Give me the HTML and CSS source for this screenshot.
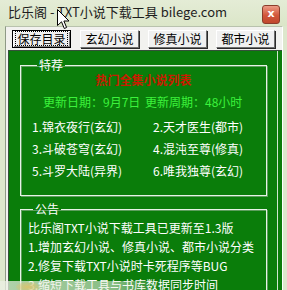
FILE: index.html
```html
<!DOCTYPE html>
<html lang="zh-CN">
<head>
<meta charset="utf-8">
<title>比乐阁 - TXT小说下载工具</title>
<link rel="stylesheet" href="styles.css">
</head>
<body>
<div class="window">
  <div class="titlebar">
    <span class="title">比乐阁 - TXT小说下载工具 bilege.com</span>
    <div class="close">x</div>
  </div>
  <div class="client">
    <div class="toolbar">
      <button class="btn btn-focus"><span class="focus-ring">保存目录</span></button>
      <button class="btn">玄幻小说</button>
      <button class="btn">修真小说</button>
      <button class="btn">都市小说</button>
    </div>
    <div class="panel">
      <div class="panel-inner">
        <fieldset class="box box-hot">
          <legend>特荐</legend>
          <div class="hot">热门全集小说列表</div>
          <div class="date"><span>更新日期：9月7日</span><span>更新周期：48小时</span></div>
          <div class="list">
            <span>1.锦衣夜行(玄幻)</span><span>2.天才医生(都市)</span>
            <span>3.斗破苍穹(玄幻)</span><span>4.混沌至尊(修真)</span>
            <span>5.斗罗大陆(异界)</span><span>6.唯我独尊(玄幻)</span>
          </div>
        </fieldset>
        <fieldset class="box box-notice">
          <legend>公告</legend>
          <p class="line">比乐阁TXT小说下载工具已更新至1.3版</p>
          <p class="line">1.增加玄幻小说、修真小说、都市小说分类</p>
          <p class="line">2.修复下载TXT小说时卡死程序等BUG</p>
          <p class="line">3.缩短下载工具与书库数据同步时间</p>
        </fieldset>
      </div>
    </div>
  </div>
  <svg class="cursor" width="13" height="21" viewBox="0 0 13 21"><path d="M0.5 0.5 L0.5 16.5 L4.5 12.8 L7.3 19.5 L9.6 18.5 L6.9 12 L12 12 Z" fill="#fff" stroke="#000" stroke-width="1"/></svg>
  <div class="ghost"><span class="ghost-icon"></span></div>
</div>
</body>
</html>
```
FILE: styles.css
```css
* { box-sizing: border-box; }
html, body { margin: 0; padding: 0; }
body {
  width: 287px;
  height: 290px;
  overflow: hidden;
  font-family: "Noto Sans CJK SC", "Noto Sans", sans-serif;
  font-size: 12px;
  background: #dfe8cf;
}
.window {
  position: relative;
  width: 287px;
  height: 290px;
  background: #dde7cc;
  display: flex;
  flex-direction: column;
  overflow: hidden;
}
.titlebar {
  height: 26px;
  flex: none;
  display: flex;
  justify-content: space-between;
  align-items: flex-start;
  padding: 0 7px 0 8px;
  background: linear-gradient(#e4ecd6, #dbe6c8);
}
.title {
  font-size: 13px;
  line-height: 24px;
  color: #1e1e1e;
  white-space: nowrap;
}
.close {
  margin-top: 5px;
  width: 18px;
  height: 19px;
  border: 1px solid #8b3d2c;
  border-radius: 3px;
  background: linear-gradient(#ec9b86, #d2563a 55%, #c0472c);
  color: #fff;
  font-family: "DejaVu Sans", sans-serif;
  font-weight: bold;
  font-size: 11px;
  line-height: 15px;
  text-align: center;
}
.client {
  flex: 1;
  margin: 0 4px 0 5px;
  background: #f2f2ef;
  border-left: 1px solid #8e9a86;
  border-top: 1px solid #b8c2ad;
  border-right: 1px solid #ffffff;
  display: flex;
  flex-direction: column;
}
.toolbar {
  display: flex;
  gap: 9px;
  padding: 3px 0 2px 6px;
}
.btn {
  width: 59px;
  height: 18px;
  padding: 0;
  font-family: "Noto Sans CJK SC", sans-serif;
  font-size: 12px;
  line-height: 14px;
  color: #000;
  background: #f0f0f0;
  border: 1px solid;
  border-color: #ffffff #6e6e6e #6e6e6e #ffffff;
  box-shadow: 1px 1px 0 #2a2a2a;
}
.btn-focus {
  border: 1px solid #000;
  box-shadow: inset 1px 1px 0 #fff, inset -1px -1px 0 #808080;
}
.focus-ring {
  display: inline-block;
  outline: 1px dotted #000;
  outline-offset: 0;
  padding: 0 1px;
  line-height: 13px;
}
.panel {
  flex: 1;
  margin-left: 2px;
  background: #0a7d0a;
  border-left: 1px solid #35503a;
  border-top: 1px solid #35503a;
  padding-right: 4px;
  display: flex;
}
.panel-inner {
  flex: 1;
  border-right: 1px solid #cfe6cf;
}
.box {
  margin: 6px 10px 0 11px;
  padding: 0;
  border: 1px solid #e6f3e6;
  box-shadow: 1px 1px 0 #5e9e5e, inset 1px 1px 0 #5e9e5e;
  color: #ffffff;
  min-inline-size: 0;
}
.box legend {
  margin-left: 5px;
  padding: 0 2px;
  font-size: 12px;
  line-height: 16px;
  color: #ffffff;
}
.box-hot {
  padding: 0 0 13px 11px;
}
.hot {
  line-height: 14px;
  text-align: center;
  padding-right: 11px;
  color: #c81c00;
  font-weight: bold;
}
.date {
  margin-top: 4px;
  padding-left: 11px;
  line-height: 22px;
  color: #3cf23c;
  display: grid;
  grid-template-columns: 102px auto;
}
.list {
  margin-top: 3px;
  display: grid;
  grid-template-columns: 121px auto;
  line-height: 22px;
}
.box-notice {
  margin-top: 5px;
  padding: 1px 0 20px 7px;
}
.line {
  margin: 0;
  line-height: 19px;
  white-space: nowrap;
}
.cursor {
  position: absolute;
  left: 57px;
  top: 9px;
}
.ghost {
  position: absolute;
  left: 0;
  top: 281px;
  width: 165px;
  height: 9px;
  background: linear-gradient(90deg, rgba(236,240,228,0.75), rgba(236,240,228,0.55) 70%, rgba(236,240,228,0));
}
.ghost-icon {
  position: absolute;
  left: 16px;
  top: 1px;
  width: 24px;
  height: 10px;
  border-radius: 50%;
  background: radial-gradient(#d8c470, rgba(200,180,90,0));
}
```
